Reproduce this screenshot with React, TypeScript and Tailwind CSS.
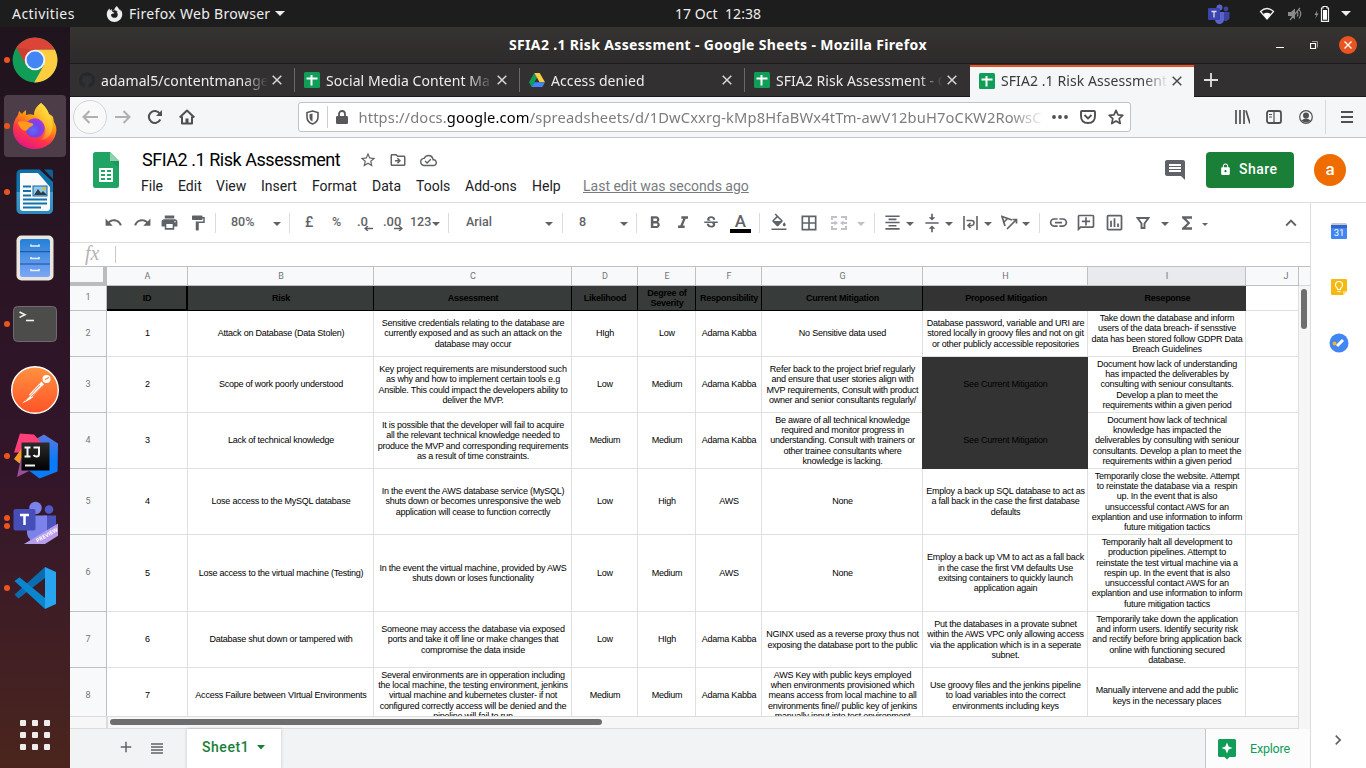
import React from "react";
import {
  MdUndo, MdRedo, MdPrint, MdFormatPaint, MdFormatBold, MdFormatItalic, MdStrikethroughS,
  MdFormatColorFill, MdBorderAll, MdFormatAlignCenter, MdVerticalAlignCenter, MdInsertLink,
  MdOutlineAddComment, MdOutlineInsertChart, MdFunctions, MdKeyboardArrowUp, MdStarBorder,
  MdOutlineDriveFileMove, MdOutlineCloudDone, MdComment, MdLock, MdAdd, MdChevronRight,
} from "react-icons/md";
import { SiGithub, SiFirefoxbrowser } from "react-icons/si";

const UBUNTU = "font-['Noto_Sans',sans-serif]";

/* ---------- dock icons ---------- */

const ChromeIcon = () => (
  <svg width="46" height="46" viewBox="-23 -23 46 46">
    <circle r="22.4" fill="#109d58" />
    <path d="M-18.5-12.6A22.4 22.4 0 0 1 19.9-10.3L0-10.3-9.2 4.8z" fill="#db4437" />
    <path d="M19.9-10.3A22.4 22.4 0 0 1-.8 22.4L9 5 0-10.3z" fill="#ffcd40" />
    <path d="M-18.5-12.6L-9 5 0-10z" fill="#c23a2e" opacity=".6" />
    <circle r="10.3" fill="#f1f1f1" />
    <circle r="8.4" fill="#4285f4" />
  </svg>
);

const FirefoxIcon = () => (
  <svg width="46" height="46" viewBox="0 0 46 46">
    <defs>
      <linearGradient id="ff1" x1=".8" y1="0" x2=".3" y2="1">
        <stop offset="0" stopColor="#fff44f" />
        <stop offset=".4" stopColor="#ff980e" />
        <stop offset=".7" stopColor="#ff3647" />
        <stop offset="1" stopColor="#e31587" />
      </linearGradient>
      <radialGradient id="ff2" cx=".4" cy=".6" r=".7">
        <stop offset="0" stopColor="#5b6df8" />
        <stop offset=".5" stopColor="#7542e5" />
        <stop offset="1" stopColor="#b833e1" />
      </radialGradient>
      <linearGradient id="ff3" x1="1" y1="0" x2="0" y2="1">
        <stop offset="0" stopColor="#fff14a" />
        <stop offset="1" stopColor="#ffa21c" stopOpacity=".2" />
      </linearGradient>
    </defs>
    <path d="M29 0c5 4 7 8 8 11 3 1 4 3 4 3l1 5c2 3 3 7 2 11-2 10-11 16-21 16C11 46 1 38 1 26c0-6 2-10 5-14l1-4 3 3c1-2 3-3 4-4v5c3-1 5-1 8 0 0-5 3-9 7-12z" fill="url(#ff1)" />
    <circle cx="23" cy="25" r="9.8" fill="url(#ff2)" />
    <path d="M6 19c5-2 11 0 13 1 2 0 3 1 2 2-2 2-4 2-5 4-2 3-6 2-8-2-1-1-2-3-2-5z" fill="#ff9a1e" />
    <path d="M29 0c5 4 7 8 8 12 4 6 5 14 1 20-3 4-7 5-10 5 5-3 6-8 5-13-1-5-8-9-11-12 0-5 3-9 7-12z" fill="url(#ff3)" />
  </svg>
);

const WriterIcon = () => (
  <svg width="38" height="46" viewBox="0 0 38 46">
    <defs>
      <linearGradient id="wr" x1="0" y1="0" x2="0" y2="1">
        <stop offset="0" stopColor="#0e6fa8" />
        <stop offset=".5" stopColor="#0f76b0" />
        <stop offset=".51" stopColor="#3d9ccf" />
        <stop offset="1" stopColor="#2b8bc0" />
      </linearGradient>
    </defs>
    <path d="M5 0.5h18.500L37 13v27.500a4.500 4.500 0 0 1-4.500 4.500H5a4.500 4.500 0 0 1-4.500-4.500V5A4.500 4.500 0 0 1 5 .5z" fill="url(#wr)" />
    <path d="M28 .5h7a2 2 0 0 1 2 2V10z" fill="#0d5f94" />
    <path d="M5 4h17l12 14v21a3 3 0 0 1-3 3H7a3 3 0 0 1-3-3V5a1 1 0 0 1 1-1z" fill="#fafafa" />
    <path d="M7 17.500h8M7 22h8M7 26.500h8M7 30.500h24M7 34.500h24M7 38.500h18" stroke="#1173ae" strokeWidth="1.800" />
    <rect x="17" y="17" width="14" height="10" fill="#8fc8ea" stroke="#1368a0" strokeWidth="1" />
    <path d="M18 26l4-6 3 4 2-2 4 4z" fill="#2d3e46" />
    <circle cx="28" cy="19.500" r="1.500" fill="#f3b517" />
  </svg>
);

const FilesIcon = () => (
  <svg width="38" height="46" viewBox="0 0 38 46">
    <defs>
      <linearGradient id="fl" x1="0" y1="0" x2="0" y2="1">
        <stop offset="0" stopColor="#2380d8" />
        <stop offset="1" stopColor="#7da6f6" />
      </linearGradient>
    </defs>
    <rect x=".5" y=".5" width="37" height="45" rx="5" fill="#ebe6de" />
    <rect x="4" y="4" width="30" height="38" rx="2.500" fill="url(#fl)" />
    <path d="M4 16.700h30M4 29h30" stroke="#1b4f94" strokeWidth="1" />
    <path d="M15 9.500v1.500h8v-1.500M15 22v1.500h8v-1.500M15 34v1.500h8v-1.500" stroke="#e8eefa" strokeWidth="1.700" fill="none" />
  </svg>
);

const TerminalIcon = () => (
  <svg width="46" height="38" viewBox="0 0 46 38">
    <rect x="1.500" y="1.500" width="43" height="35" rx="4" fill="#4c4c4a" stroke="#71696f" />
    <path d="M7.500 7l5.500 2.700-5.500 2.700" stroke="#f2f2f2" strokeWidth="1.600" fill="none" />
    <path d="M14 15.500h8" stroke="#f2f2f2" strokeWidth="1.600" />
  </svg>
);

const PostmanIcon = () => (
  <svg width="50" height="50" viewBox="-25 -25 50 50">
    <defs>
      <linearGradient id="pm" x1="0" y1="0" x2="0" y2="1">
        <stop offset="0" stopColor="#ff9240" />
        <stop offset="1" stopColor="#ff5327" />
      </linearGradient>
    </defs>
    <circle r="23.300" fill="url(#pm)" stroke="#fff" strokeWidth="1.400" />
    <circle cx="11.500" cy="-11" r="4" fill="#fff" />
    <path d="M10-10.500l4-2" stroke="#ff7a36" strokeWidth="1.200" />
    <path d="M6.500-8.500L-6 4.500l2.500 3L9-5.500zM-4.500 5L-13 13.500l7-3.500 4.500-3z" fill="#fff" />
    <path d="M5-5L-10 11M7.500-4L-4 7" stroke="#ff6a30" strokeWidth=".8" />
  </svg>
);

const IntellijIcon = () => (
  <svg width="46" height="46" viewBox="0 0 46 46">
    <defs>
      <linearGradient id="ij" x1="0" y1="0" x2="0" y2="1">
        <stop offset="0" stopColor="#5a78dd" />
        <stop offset=".6" stopColor="#087cfa" />
      </linearGradient>
      <linearGradient id="ijb" x1="0" y1="0" x2="0" y2="1">
        <stop offset="0" stopColor="#2c2c2c" />
        <stop offset="1" stopColor="#000" />
      </linearGradient>
    </defs>
    <path d="M32 1.500l14 9-.5 28-18 7-12-9 4-28z" fill="url(#ij)" />
    <path d="M8 .5l14 1 9 10-14 8-15 0z" fill="#fe3f78" />
    <path d="M2 26l8-11 4 18-7-3z" fill="#f59a26" />
    <path d="M9 25l14 10-18 9z" fill="#9a4f97" />
    <rect x="9.500" y="9.500" width="28" height="28" fill="url(#ijb)" />
    <path d="M13 32.500h10" stroke="#f5f5f5" strokeWidth="2" />
    <path d="M12.500 14.500h6M15.500 14.500v9M12.500 23.500h6M21.500 14.500h5.500v6.500q0 2.500-2.500 2.500-2 0-3-1.500" stroke="#f5f5f5" strokeWidth="2" fill="none" />
  </svg>
);

const TeamsIcon = () => (
  <div className="relative h-[46px] w-[46px] overflow-hidden">
    <svg width="46" height="46" viewBox="0 0 46 46">
      <circle cx="23.500" cy="9" r="6.200" fill="#7b83eb" />
      <circle cx="37" cy="10.500" r="4.300" fill="#5059c9" />
      <path d="M31 16.500h13v13a6 6 0 0 1-13 2z" fill="#4b53bc" />
      <path d="M15 16.500h20v16a10 10 0 0 1-20 2z" fill="#7b83eb" />
      <rect x="1.500" y="10" width="22" height="21.500" rx="2" fill="#464eb8" />
      <path d="M8 16h9M12.500 16v10" stroke="#fff" strokeWidth="2.500" />
      <path d="M12 45L47 24v12L33 45z" fill="#b79ceb" />
    </svg>
    <span className="absolute top-[33px] left-[23px] -rotate-[30deg] font-['Open_Sans',sans-serif] text-[5.500px] leading-[7px] font-bold text-white">PREVIEW</span>
  </div>
);

const CodeIcon = () => (
  <svg width="44" height="44" viewBox="0 0 44 44">
    <path d="M1.500 28.500l4 4L32 12V1z" fill="#0b6db0" />
    <path d="M1.500 15l5-3.800L32 32v11z" fill="#0a86cf" />
    <path d="M32 1l11 5v32l-11 5z" fill="#27a5f0" />
  </svg>
);

const dock: { icon: React.ReactNode; dots: number; active?: boolean }[] = [
  { icon: <ChromeIcon />, dots: 1 },
  { icon: <FirefoxIcon />, dots: 1, active: true },
  { icon: <WriterIcon />, dots: 1 },
  { icon: <FilesIcon />, dots: 0 },
  { icon: <TerminalIcon />, dots: 1 },
  { icon: <PostmanIcon />, dots: 0 },
  { icon: <IntellijIcon />, dots: 1 },
  { icon: <TeamsIcon />, dots: 2 },
  { icon: <CodeIcon />, dots: 1 },
];

function Dock() {
  return (
    <aside className="flex w-[70px] shrink-0 flex-col bg-linear-to-b from-[#1f141d] via-[#33152a] via-60% to-[#4b251d]">
      {dock.map((d, i) => (
        <div key={i} className="relative flex h-[66px] items-center justify-center">
          <div className={"flex h-[62px] w-[62px] items-center justify-center rounded-[4px] " + (d.active ? "bg-[#4c3d48]" : "")}>{d.icon}</div>
          <div className="absolute top-0 left-[4px] flex h-full flex-col items-center justify-center gap-[2px]">
            {Array.from({ length: d.dots }).map((_, k) => (
              <span key={k} className="h-[6px] w-[6px] rounded-full bg-[#e95420]" />
            ))}
          </div>
        </div>
      ))}
      <div className="mt-auto mb-[18px] ml-[20px] grid w-[30px] grid-cols-3 gap-[6px]">
        {Array.from({ length: 9 }).map((_, i) => (
          <span key={i} className="h-[6px] w-[6px] rounded-[1px] bg-[#efedec]" />
        ))}
      </div>
    </aside>
  );
}

/* ---------- desktop bar ---------- */

function TopBar() {
  return (
    <header className={`flex h-[27px] items-center bg-[#1d1d1d] text-[14px] text-[#eeeeee] ${UBUNTU}`}>
      <span className="ml-[12px] w-[94px] tracking-[0.45px]">Activities</span>
      <SiFirefoxbrowser size={16} className="w-[17px]" />
      <span className="ml-[6px] w-[142px] tracking-[0.32px] whitespace-nowrap">Firefox Web Browser</span>
      <svg className="ml-[4px]" width="10" height="5"><path d="M0 0h10L5 5z" fill="#eee" /></svg>
      <span className="ml-[390px] w-[86px] tracking-[0.05px] whitespace-pre">17 Oct  12:38</span>
      <svg className="ml-[447px]" width="22" height="20" viewBox="0 0 22 20">
        <circle cx="11.500" cy="3.500" r="3" fill="#5a62cc" />
        <circle cx="18" cy="5" r="2.400" fill="#3d449f" />
        <path d="M15 8h6.500v6a4 4 0 0 1-6.500 2z" fill="#3d449f" />
        <path d="M7 8h9v7a4.500 4.500 0 0 1-9 1z" fill="#5a62cc" />
        <rect y="4" width="12" height="12" rx="1" fill="#3c44b0" />
        <path d="M3.500 7.500h5M6 7.500v6" stroke="#ddd" strokeWidth="1.300" />
      </svg>
      <svg className="ml-[29px]" width="16" height="13" viewBox="0 0 16 13">
        <path d="M1.500 4.500Q8-1.500 14.500 4.500L8 12z" fill="none" stroke="#eee" strokeWidth="1.300" />
        <path d="M4.200 7Q8 4.300 11.800 7L8 12z" fill="#fff" />
      </svg>
      <svg className="ml-[13px]" width="15" height="14" viewBox="0 0 15 14" stroke="#8a8a8a" fill="none" strokeWidth="1.200">
        <path d="M0 5h3l4-3.500v11L3 9H0z" fill="#8a8a8a" stroke="none" />
        <path d="M9 4.500q2 2.500 0 5M11 2.500q3.500 4.500 0 9M2 13L12 1" />
      </svg>
      <svg className="ml-[11px]" width="16" height="16" viewBox="0 0 16 16">
        <path d="M3.500 4L.5 9h2L1 13 4.500 7.500h-2z" fill="#999" />
        <path d="M9 2V.5h4V2h1.500v13.300h-7V2z" fill="none" stroke="#eee" strokeWidth="1.200" />
        <path d="M9 4h4v9.700H9z" fill="#fff" />
      </svg>
      <svg className="ml-[11px]" width="10" height="5"><path d="M0 0h10L5 5z" fill="#eee" /></svg>
    </header>
  );
}

/* ---------- browser chrome ---------- */

function TitleBar() {
  return (
    <div className={`flex h-[37px] items-center border-b border-[#1d1b1b] bg-linear-to-b from-[#363431] to-[#2d2a2b] text-white ${UBUNTU}`}>
      <div className="w-[439px]" />
      <span className="w-[418px] pb-px text-[14px] font-bold tracking-[0.340px] whitespace-nowrap">SFIA2 .1 Risk Assessment - Google Sheets - Mozilla Firefox</span>
      <span className="mt-[5px] ml-[349px] h-px w-[8px] bg-white" />
      <svg className="ml-[26px]" width="9" height="9"><path d="M.5 2.500h5v5h-5z" fill="none" stroke="#fff" strokeWidth="1.200" /><path d="M2 .5h5.500v6" fill="none" stroke="#999" strokeWidth="1" /></svg>
      <svg className="ml-[20px]" width="18" height="18"><circle cx="9" cy="9" r="9" fill="#e95420" /><path d="M5.500 5.500l7 7M12.500 5.500l-7 7" stroke="#fff" strokeWidth="1.300" /></svg>
    </div>
  );
}

const SheetFav = () => (
  <svg width="16" height="16"><rect width="16" height="16" rx="1.500" fill="#0f9d58" /><path d="M2.500 6.500h11M7.500 3v10.500" stroke="#fff" strokeWidth="2" /></svg>
);
const DriveFav = () => (
  <svg width="16" height="14" viewBox="0 0 16 14"><path d="M5.300 0L0 9.300 2.600 14 8 4.700z" fill="#0f9d58" /><path d="M5.300 0h5.400L16 9.300h-5.400z" fill="#ffcd40" /><path d="M5.300 9.300H16L13.300 14H2.600z" fill="#4285f4" /></svg>
);
const Close = ({ c }: { c: string }) => (
  <svg width="10" height="10"><path d="M.7.7l8.600 8.600M9.300.7L.7 9.300" stroke={c} strokeWidth="1.500" /></svg>
);

const tabs = [
  { t: "adamal5/contentmanage", i: <SiGithub size={16} color="#24292e" />, s: "tracking-[0.060px]" },
  { t: "Social Media Content Ma", i: <SheetFav />, s: "tracking-[0.050px]" },
  { t: "Access denied", i: <DriveFav />, s: "tracking-[0.080px]" },
  { t: "SFIA2 Risk Assessment - G", i: <SheetFav />, s: "tracking-[0.050px]" },
];

function Tabs() {
  return (
    <div className={`flex h-[33px] border-b border-[#1a1819] bg-[#323031] text-[14px] text-[#ededed] ${UBUNTU}`}>
      {tabs.map((t, k) => (
        <div key={k} className="flex w-[225px] items-center">
          <span className="ml-[9px] w-[16px] shrink-0">{t.i}</span>
          <span className={"ml-[6px] w-[167px] overflow-hidden mask-r-from-85% whitespace-nowrap " + t.s}>{t.t}</span>
          <span className="ml-[4px] w-[12px]"><Close c="#d8d8d8" /></span>
          <span className={"ml-[10px] h-[24px] w-px " + (k < 3 ? "bg-[#6a6869]" : "")} />
        </div>
      ))}
      <div className="mt-px -mb-px flex w-[224px] items-center border-t-2 border-[#e95420] bg-[#f5f6f7] pb-[3px] text-[#3b3b3d]">
        <span className="ml-[9px] w-[16px] shrink-0"><SheetFav /></span>
        <span className="ml-[6px] w-[167px] overflow-hidden mask-r-from-85% tracking-[0.080px] whitespace-nowrap">SFIA2 .1 Risk Assessment</span>
        <span className="ml-[4px]"><Close c="#4a4a4c" /></span>
      </div>
      <svg className="mt-[9px] ml-[10px]" width="14" height="14"><path d="M7 0v14M0 7h14" stroke="#e0e0e0" strokeWidth="1.800" /></svg>
    </div>
  );
}

function NavBar() {
  return (
    <div className="flex h-[41px] items-center border-b border-[#c3c6ca] bg-[#f5f6f7]">
      <span className="ml-[3px] flex h-[34px] w-[34px] items-center justify-center rounded-full border border-[#d5d6d8] bg-[#f9f9fa]">
        <svg width="16" height="14"><path d="M16 7H1.500M7.500 1L1.500 7l6 6" fill="none" stroke="#b0b0b1" strokeWidth="2" /></svg>
      </span>
      <svg className="ml-[8px]" width="16" height="14"><path d="M0 7h14.500M8.500 1l6 6-6 6" fill="none" stroke="#b0b0b1" strokeWidth="2" /></svg>
      <svg className="ml-[16px]" width="16" height="16"><path d="M13.300 10.500A6 6 0 1 1 12.800 4.500" fill="none" stroke="#505053" strokeWidth="2" /><path d="M15 1v6H9z" fill="#505053" /></svg>
      <svg className="ml-[16px]" width="16" height="16"><path d="M.7 8.500L8 1.500l7.300 7M3 7.500V14.500h10V7.500" fill="none" stroke="#505053" strokeWidth="2" strokeLinejoin="round" /><path d="M6.500 14.500V9.500h3v5z" fill="#505053" /></svg>
      <div className="ml-[103px] flex h-[30px] w-[833px] items-center rounded-[3px] border border-[#bfc3c8] bg-white">
        <svg className="ml-[7px]" width="13" height="15"><path d="M6.500 1L12 2.500V7q0 5-5.500 7Q1 12 1 7V2.500z" fill="none" stroke="#58585b" strokeWidth="1.600" /><path d="M6.500 3.500v8Q3.500 10 3.500 7V4.200z" fill="#58585b" /></svg>
        <span className="ml-[8px] h-[22px] w-px bg-[#cfcfd1]" />
        <svg className="ml-[8px]" width="12" height="14"><rect y="6" width="12" height="8" rx="1.200" fill="#58585b" /><path d="M3 7V4a3 3 0 0 1 6 0v3" fill="none" stroke="#58585b" strokeWidth="1.800" /></svg>
        <span className={`ml-[10px] w-[687px] overflow-hidden mask-r-from-95% pl-[0.5px] text-[14.700px] tracking-[0.135px] whitespace-nowrap text-[#7d7d80] ${UBUNTU}`}>
          https://docs.<b className="font-normal text-black">google.com</b>/spreadsheets/d/1DwCxxrg-kMp8HfaBWx4tTm-awV12buH7oCKW2RowsC
        </span>
        <svg className="ml-[7px]" width="16" height="4"><g fill="#505053"><circle cx="2" cy="2" r="1.900" /><circle cx="8" cy="2" r="1.900" /><circle cx="14" cy="2" r="1.900" /></g></svg>
        <svg className="ml-[12px]" width="16" height="14"><path d="M1 2q0-1 1-1h12q1 0 1 1v4q0 7-7 7T1 6z" fill="none" stroke="#505053" strokeWidth="1.900" /><path d="M4.500 5L8 8.500 11.500 5" fill="none" stroke="#505053" strokeWidth="1.900" /></svg>
        <svg className="ml-[12px]" width="16" height="16"><path d="M8 1.300l2 4.500 4.800.5-3.600 3.300 1 4.900L8 12l-4.200 2.500 1-4.900L1.200 6.300 6 5.800z" fill="none" stroke="#505053" strokeWidth="1.700" strokeLinejoin="round" /></svg>
      </div>
      <svg className="ml-[104px]" width="15" height="14"><path d="M1 0v14M5 0v14M9 0v14M11 .5L15 13.500" stroke="#505053" strokeWidth="1.700" fill="none" /></svg>
      <svg className="ml-[16px]" width="16" height="14"><rect x="1" y="1" width="14" height="12" rx="2" fill="none" stroke="#505053" strokeWidth="1.800" /><path d="M8 1v12M3 4.500h3M3 7h3" stroke="#505053" strokeWidth="1.200" /></svg>
      <svg className="ml-[17px]" width="14" height="14"><circle cx="7" cy="7" r="6.300" fill="none" stroke="#505053" strokeWidth="1.200" /><circle cx="7" cy="5.500" r="3" fill="#505053" /><path d="M2.500 10.500Q7 6.500 11.500 10.500 7 14.500 2.500 10.500z" fill="#505053" /></svg>
      <span className="ml-[12px] h-[34px] w-px bg-[#d7d8da]" />
      <svg className="ml-[15px]" width="12" height="12"><path d="M0 1h12M0 6h12M0 11h12" stroke="#505053" strokeWidth="2" /></svg>
    </div>
  );
}

/* ---------- document header ---------- */

const menus: [string, string][] = [
  ["File", "w-[37px]"], ["Edit", "w-[38px]"], ["View", "w-[45px]"], ["Insert", "w-[51px]"],
  ["Format", "w-[60px]"], ["Data", "w-[44px]"], ["Tools", "w-[49px]"], ["Add-ons", "w-[67px]"], ["Help", "w-[51px]"],
];

function DocHeader() {
  return (
    <div className="flex h-[65px] border-b border-[#dadce0] bg-white font-['Roboto',sans-serif]">
      <svg className="mt-[14px] ml-[23px] shrink-0" width="26" height="36" viewBox="0 0 26 36">
        <path d="M2.500 0H17l9 9v24.500a2.500 2.500 0 0 1-2.500 2.500h-21A2.500 2.500 0 0 1 0 33.500v-31A2.500 2.500 0 0 1 2.500 0z" fill="#1fa463" />
        <path d="M17 0l9 9h-9z" fill="#8ed1b1" />
        <path d="M17.500 9H26v7z" fill="#17945a" opacity=".7" />
        <path d="M6 16h14v14H6z" fill="#fff" />
        <path d="M8 18h4v2H8zM14 18h4v2h-4zM8 22h4v2H8zM14 22h4v2h-4zM8 26h4v2H8zM14 26h4v2h-4z" fill="#1fa463" />
      </svg>
      <div className="ml-[22px] w-[900px]">
        <div className="mt-[11px] flex h-[22px] items-center text-[#5f6368]">
          <span className="ml-px w-[217px] text-[18px] leading-[22px] tracking-[-0.460px] whitespace-nowrap text-black">SFIA2 .1 Risk Assessment</span>
          <MdStarBorder size={18} />
          <MdOutlineDriveFileMove size={18} className="ml-[12px]" />
          <MdOutlineCloudDone size={17} className="ml-[13px]" />
        </div>
        <div className="mt-[5px] flex h-[20px] items-center text-[14px] text-[#202124]">
          {menus.map(([m, w]) => <span key={m} className={w}>{m}</span>)}
          <span className="text-[14px] text-[#777b80] underline">Last edit was seconds ago</span>
        </div>
      </div>
      <div className="flex h-[64px] grow items-center">
        <MdComment size={24} className="ml-[122px] shrink-0 text-[#5f6368]" />
        <button className="ml-[19px] flex h-[36px] w-[88px] shrink-0 items-center rounded-[4px] bg-[#1a8038] pb-px text-[14px] font-medium tracking-[0.45px] text-white">
          <MdLock size={13} className="mr-[7px] ml-[13px]" />Share
        </button>
        <span className="ml-[20px] flex h-[32px] w-[32px] shrink-0 items-center justify-center rounded-full bg-[#ef6c00] text-[17px] font-medium text-white">a</span>
      </div>
    </div>
  );
}

/* ---------- toolbar ---------- */

const Caret = ({ c = "" }: { c?: string }) => (
  <svg className={"mt-[2px] shrink-0 " + c} width="8" height="4"><path d="M0 0h8L4 4z" fill="currentColor" /></svg>
);
const Sep = ({ c }: { c: string }) => <span className={"h-[20px] w-px shrink-0 bg-[#dadce0] " + c} />;

function Toolbar() {
  const s = "shrink-0 ";
  return (
    <div className="flex h-[40px] w-[1240px] items-center border-b border-[#dadce0] bg-white font-['Roboto',sans-serif] text-[12.500px] text-[#5f6368]">
      <MdUndo size={19} className={s + "ml-[34px]"} />
      <MdRedo size={19} className={s + "ml-[10px]"} />
      <MdPrint size={19} className={s + "ml-[8px]"} />
      <MdFormatPaint size={18} className={s + "ml-[10px]"} />
      <Sep c="ml-[8px]" />
      <span className="ml-[15px] w-[42px] font-medium">80%</span>
      <Caret />
      <Sep c="ml-[8px]" />
      <span className="ml-[15px] w-[27px] text-[14px] font-medium">£</span>
      <span className="w-[25px] font-medium">%</span>
      <span className="flex w-[26px] flex-col text-[13px] leading-[13px] font-medium">
        .0
        <svg className="-mt-[2px] ml-[7px]" width="9" height="5"><path d="M9 2.500H2M4 0L1 2.500l3 2.500" fill="none" stroke="#5f6368" strokeWidth="1.300" /></svg>
      </span>
      <span className="flex w-[27px] flex-col text-[13px] leading-[13px] font-medium">
        .00
        <svg className="-mt-[2px] ml-[11px]" width="9" height="5"><path d="M0 2.500h7M5 0l3 2.500L5 5" fill="none" stroke="#5f6368" strokeWidth="1.300" /></svg>
      </span>
      <span className="w-[22px] font-medium">123</span>
      <Caret />
      <Sep c="ml-[8px]" />
      <span className="ml-[17px] w-[79px] font-medium">Arial</span>
      <Caret />
      <Sep c="ml-[9px]" />
      <span className="ml-[16px] w-[41px] font-medium">8</span>
      <Caret />
      <Sep c="ml-[8px]" />
      <MdFormatBold size={20} className={s + "ml-[8px]"} />
      <MdFormatItalic size={20} className={s + "ml-[8px]"} />
      <MdStrikethroughS size={18} className={s + "ml-[9px]"} />
      <span className="ml-[10px] flex w-[21px] shrink-0 flex-col items-center text-[17px] leading-[16px] font-medium">
        A
        <span className="h-[4px] w-[21px] bg-black" />
      </span>
      <Sep c="ml-[8px]" />
      <MdFormatColorFill size={18} className={s + "mb-[3px] ml-[10px]"} viewBox="0 0 24 20" />
      <MdBorderAll size={20} className={s + "ml-[11px]"} />
      <svg className="ml-[12px] shrink-0 text-[#c0c2c5]" width="16" height="14" viewBox="0 0 16 14" fill="none" stroke="currentColor" strokeWidth="2">
        <path d="M6 1H1v3M10 1h5v3M6 13H1v-3M10 13h5v-3M0 7h4M16 7h-4" /><path d="M3.500 4.500L7 7l-3.500 2.500zM12.500 4.500L9 7l3.500 2.500z" fill="currentColor" stroke="none" />
      </svg>
      <Caret c="ml-[10px] text-[#c0c2c5]" />
      <Sep c="ml-[9px]" />
      <MdFormatAlignCenter size={19} className={s + "ml-[8px]"} />
      <Caret c="ml-[4px]" />
      <MdVerticalAlignCenter size={20} className={s + "ml-[8px]"} />
      <Caret c="ml-[3px]" />
      <svg className="ml-[10px] shrink-0" width="15" height="16" fill="none" stroke="currentColor" strokeWidth="1.800">
        <path d="M1 1v14M14 1v14M3.500 5.500h5a2.500 2.500 0 0 1 0 5H5.500M7.500 8L5 10.500 7.500 13" strokeWidth="1.600" />
      </svg>
      <Caret c="ml-[6px]" />
      <svg className="ml-[9px] shrink-0" width="17" height="15" fill="none" stroke="currentColor" strokeWidth="1.700">
        <path d="M4 11L1 1.500l10 3.500M3 7l4-4M6 14L15 5M11.500 4.500h4v4" />
      </svg>
      <Caret c="ml-[4px]" />
      <Sep c="ml-[9px]" />
      <MdInsertLink size={21} className={s + "ml-[8px]"} />
      <MdOutlineAddComment size={20} className={s + "ml-[7px] -scale-x-100"} />
      <MdOutlineInsertChart size={21} className={s + "ml-[8px]"} />
      <svg className="ml-[11px] shrink-0" width="14" height="12" fill="none" stroke="currentColor" strokeWidth="1.900"><path d="M1.500 1h11L8.500 6.500V11h-3V6.500z" /></svg>
      <Caret c="ml-[11px]" />
      <MdFunctions size={20} className={s + "ml-[8px]"} />
      <svg className="mt-[3px] ml-[5px] shrink-0" width="6" height="3"><path d="M0 0h6L3 3z" fill="currentColor" /></svg>
      <MdKeyboardArrowUp size={22} className={s + "ml-[72px]"} />
    </div>
  );
}

/* ---------- grid ---------- */

const COLS = "grid grid-cols-[37px_81px_186px_198px_66px_58px_66px_161px_165px_158px_53px]";
const letters = ["A", "B", "C", "D", "E", "F", "G", "H", "I", "J"];
const heads = ["ID", "Risk", "Assessment", "Likelihood", "Degree of\nSeverity", "Responsibility", "Current Mitigation", "Proposed Mitigation", "Reseponse"];

const rows: { h: string; c: string[] }[] = [
  { h: "h-[46px]", c: ["1", "Attack on Database (Data Stolen)", "Sensitive credentials relating to the database are\ncurrently exposed and as such an attack on the\ndatabase may occur", "HIgh", "Low", "Adama Kabba", "No Sensitive data used", "Database password, variable and URI are\nstored locally in groovy files and not on git\nor other publicly accessible repositories", "Take down the database and inform\nusers of the data breach- if sensstive\ndata has been stored follow GDPR Data\nBreach Guidelines"] },
  { h: "h-[56px]", c: ["2", "Scope of work poorly understood", "Key project requirements are misunderstood such\nas why and how to implement certain tools e.g\nAnsible. This could impact the developers ability to\ndeliver the MVP.", "Low", "Medium", "Adama Kabba", "Refer back to the project brief regularly\nand ensure that user stories align with\nMVP requirements, Consult with product\nowner and senior consultants regularly/", "See Current Mitigation", "Document how lack of understanding\nhas impacted the deliverables by\nconsulting with seniour consultants.\nDevelop a plan to meet the\nrequirements within a given period"] },
  { h: "h-[56px]", c: ["3", "Lack of technical knowledge", "It is possible that the developer will fail to acquire\nall the relevant technical knowledge needed to\nproduce the MVP and corresponding requirements\nas a result of time constraints.", "Medium", "Medium", "Adama Kabba", "Be aware of all technical knowledge\nrequired and monitor progress in\nunderstanding. Consult with trainers or\nother trainee consultants where\nknowledge is lacking.", "See Current Mitigation", "Document how lack of technical\nknowledge has impacted the\ndeliverables by consulting with seniour\nconsultants. Develop a plan to meet the\nrequirements within a given period"] },
  { h: "h-[66px]", c: ["4", "Lose access to the MySQL database", "In the event the AWS database service (MySQL)\nshuts down or becomes unresponsive the web\napplication will cease to function correctly", "Low", "High", "AWS", "None", "Employ a back up SQL database to act as\na fall back in the case the first database\ndefaults", "Temporarily close the website. Attempt\nto reinstate the database via a  respin\nup. In the event that is also\nunsuccessful contact AWS for an\nexplantion and use information to inform\nfuture mitigation tactics"] },
  { h: "h-[77px]", c: ["5", "Lose access to the virtual machine (Testing)", "In the event the virtual machine, provided by AWS\nshuts down or loses functionality", "Low", "Medium", "AWS", "None", "Employ a back up VM to act as a fall back\nin the case the first VM defaults Use\nexitsing containers to quickly launch\napplication again", "Temporarily halt all development to\nproduction pipelines. Attempt to\nreinstate the test virtual machine via a\nrespin up. In the event that is also\nunsuccessful contact AWS for an\nexplantion and use information to inform\nfuture mitigation tactics"] },
  { h: "h-[56px]", c: ["6", "Database shut down or tampered with", "Someone may access the database via exposed\nports and take it off line or make changes that\ncompromise the data inside", "Low", "HIgh", "Adama Kabba", "NGINX used as a reverse proxy thus not\nexposing the database port to the public", "Put the databases in a provate subnet\nwithin the AWS VPC only allowing access\nvia the application which is in a seperate\nsubnet.", "Temporarily take down the application\nand inform users. Identify security risk\nand rectify before bring application back\nonline with functioning secured\ndatabase."] },
  { h: "h-[56px]", c: ["7", "Access Failure between VIrtual Environments", "Several environments are in opperation including\nthe local machine, the testing environment, jenkins\nvirtual machine and kubernetes cluster- if not\nconfigured correctly access will be denied and the\npipeline will fail to run", "Medium", "Medium", "Adama Kabba", "AWS Key with public keys employed\nwhen environments provisioned which\nmeans access from local machine to all\nenvironments fine// public key of jenkins\nmanually input into test environment", "Use groovy files and the jenkins pipeline\nto load variables into the correct\nenvironments including keys", "Manually intervene and add the public\nkeys in the necessary places"] },
];

const RowNum = ({ n }: { n: number }) => (
  <div className="flex items-center justify-center border-r border-b border-[#c0c0c0] bg-[#f8f9fa] font-['Roboto',sans-serif] text-[9px] text-[#777]">{n}</div>
);

function Grid() {
  return (
    <div className="flex h-[462px] w-[1240px]">
      <div className="h-[449px] w-[1229px] overflow-hidden bg-white">
        <div className={`${COLS} h-[19px]`}>
          <div className="border-r-4 border-b-4 border-[#bcbcbc] bg-[#f8f9fa]" />
          {letters.map((l) => (
            <div key={l} className={"flex items-center justify-center border-r border-b border-[#c0c0c0] pt-px font-['Roboto',sans-serif] text-[9px] text-[#70757a] " + (l === "I" ? "bg-[#e8eaed] pl-px" : l === "J" ? "bg-[#f8f9fa] pl-[28px]" : "bg-[#f8f9fa] pl-px")}>{l}</div>
          ))}
        </div>
        <div className={`${COLS} h-[25px]`}>
          <RowNum n={1} />
          {heads.map((h, i) => (
            <div key={h} className={"flex items-center justify-center pl-px text-center font-['Liberation_Sans',Arial,sans-serif] text-[9px] leading-[10px] font-bold tracking-[-0.250px] whitespace-pre text-black " + (i === 0 ? "border-r-2 border-b-2 border-black bg-[#373b3a]" : i < 7 ? "border-r border-b border-black bg-[#373b3a] pb-px" : "bg-[#333333] pb-[2px]")}>{h}</div>
          ))}
          <div className="border-r border-b border-[#e0e0e0]" />
        </div>
        {rows.map((r, ri) => (
          <div key={ri} className={`${COLS} ${r.h}`}>
            <RowNum n={ri + 2} />
            {r.c.map((t, i) => {
              const dark = i === 7 && (ri === 1 || ri === 2);
              return (
                <div key={i} className={"flex items-center justify-center overflow-visible pl-px text-center font-['Liberation_Sans',Arial,sans-serif] text-[9px] leading-[10.330px] tracking-[-0.240px] whitespace-pre text-black " + (dark ? "-ml-px bg-[#333333] pb-[2px]" : "border-r border-b border-[#e0e0e0]")}>{t}</div>
              );
            })}
            <div className="border-r border-b border-[#e0e0e0]" />
          </div>
        ))}
      </div>
      <div className="w-[11px] bg-[#f6f6f6]">
        <div className="h-[19px] border-b border-[#d5d7dc] bg-[#f8f9fa]" />
        <div className="mt-[3px] ml-[2px] h-[40px] w-[6px] rounded-full bg-[#6e6e6e]" />
      </div>
    </div>
  );
}

function HScroll() {
  return (
    <div className="-mt-[13px] flex h-[13px] w-[1240px] border-y border-[#dcdcdc] bg-[#f7f7f7]">
      <div className="w-[38px] border-r-2 border-[#dcdcdc]" />
      <div className="mt-[2px] ml-[2px] h-[6px] w-[492px] rounded-full bg-[#6e6e6e]" />
      <div className="ml-[696px] w-px bg-[#dcdcdc]" />
    </div>
  );
}

function SheetBar() {
  return (
    <div className="flex h-[40px] w-[1240px] items-stretch bg-[#f1f3f4] font-['Roboto',sans-serif]">
      <MdAdd size={18} className="mt-[9px] ml-[47px] text-[#5f6368]" />
      <svg className="mt-[14px] ml-[16px]" width="12" height="11"><path d="M0 1h12M0 4h12M0 7h12M0 10h12" stroke="#5f6368" strokeWidth="1.600" /></svg>
      <div className="ml-[24px] flex w-[94px] items-center bg-white pb-[3px] pl-[15px] text-[14px] font-medium tracking-[0.550px] text-[#188038] shadow-[0_0_3px_rgba(60,64,67,0.25)]">
        <span className="w-[55px]">Sheet1</span>
        <svg width="8" height="5"><path d="M0 0h8L4 4.500z" fill="#188038" /></svg>
      </div>
      <div className="ml-auto flex w-[105px] items-center border-l border-[#c4c7ca] bg-[#fcfcfc]">
        <svg className="ml-[12px]" width="18" height="21"><path d="M1.500 0h15A1.500 1.500 0 0 1 18 1.500v15a1.500 1.500 0 0 1-1.500 1.500h-5L9 20.500 6.500 18h-5A1.500 1.500 0 0 1 0 16.500v-15A1.500 1.500 0 0 1 1.500 0z" fill="#0f9d58" /><path d="M9 3.500l1.600 3.900L14.500 9l-3.900 1.600L9 14.500l-1.600-3.900L3.500 9l3.900-1.600z" fill="#fff" /></svg>
        <span className="ml-[14px] text-[12.500px] tracking-[-0.200px] text-[#0f9d58]">Explore</span>
      </div>
    </div>
  );
}

function SidePanel() {
  return (
    <div className="flex w-[56px] flex-col items-center border-l border-[#dadce0] bg-white">
      <svg className="mt-[20px]" width="16" height="16"><rect y="1" width="16" height="15" rx="1" fill="#4285f4" /><path d="M0 1.500Q0 0 1.500 0h13Q16 0 16 1.500V2H0z" fill="#c9c9c9" /><path d="M0 2h16v3H0z" fill="#3366cc" /><text x="8" y="13" textAnchor="middle" fontSize="9.500" fontFamily="Roboto" fill="#fff">31</text></svg>
      <svg className="mt-[40px]" width="16" height="16"><path d="M1 0h14a1 1 0 0 1 1 1v11l-4 4H1a1 1 0 0 1-1-1V1a1 1 0 0 1 1-1z" fill="#f5b912" /><path d="M16 12l-4 4v-4z" fill="#f9dd84" /><path d="M6.500 9.500Q4.500 8 4.500 6a3.500 3.500 0 0 1 7 0q0 2-2 3.500v1h-3zM6.500 12.500h3" fill="none" stroke="#fff" strokeWidth="1.100" /></svg>
      <svg className="mt-[38px]" width="20" height="20"><circle cx="10" cy="10" r="9.500" fill="#4285f4" /><path d="M8 13L14 7" stroke="#fff" strokeWidth="3" /><circle cx="5.500" cy="10.500" r="1.900" fill="#f5b912" /></svg>
      <MdChevronRight size={20} className="mt-auto mr-[2px] mb-[18px] text-[#5f6368]" />
    </div>
  );
}

export default function App() {
  return (
    <div className="flex h-[768px] w-[1366px] flex-col overflow-hidden bg-white">
      <TopBar />
      <div className="flex h-[741px]">
        <Dock />
        <main className="w-[1296px]">
          <TitleBar />
          <Tabs />
          <NavBar />
          <DocHeader />
          <div className="flex h-[565px]">
            <div className="w-[1240px]">
              <Toolbar />
              <div className="flex h-[24px] items-center border-b border-[#c0c0c0] bg-white">
                <span className="ml-[15px] w-[30px] pb-[4px] font-['Liberation_Serif',serif] text-[20px] leading-[20px] text-[#b4b4b4] italic">fx</span>
                <span className="h-[17px] w-px bg-[#c8c8c8]" />
              </div>
              <Grid />
              <HScroll />
              <SheetBar />
            </div>
            <SidePanel />
          </div>
        </main>
      </div>
    </div>
  );
}
